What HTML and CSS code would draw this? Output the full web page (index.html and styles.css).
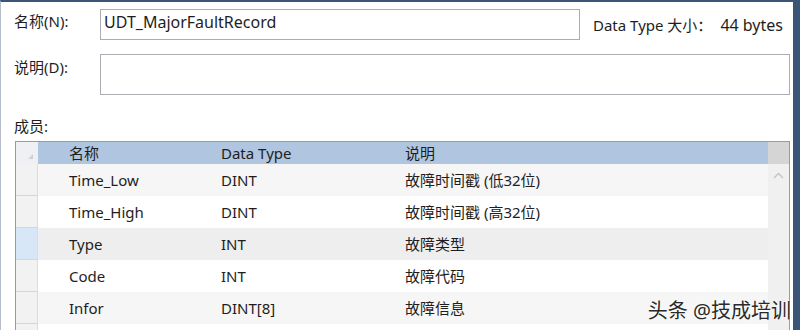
FILE: index.html
```html
<!DOCTYPE html>
<html lang="zh-CN">
<head>
    <meta charset="UTF-8">
    <title>UDT_MajorFaultRecord</title>
    <link rel="stylesheet" href="styles.css">
</head>
<body>

    <!-- Ventana del editor de UDT -->
    <div class="window">
        <div class="form">

            <div class="field-row">
                <span class="label">名称(N):</span>
                <div class="input name-input">UDT_MajorFaultRecord</div>
                <div class="size-info">
                    <span>Data Type 大小：</span>
                    <span class="size-value">44 bytes</span>
                </div>
            </div>

            <div class="field-row desc-row">
                <span class="label">说明(D):</span>
                <div class="input desc-input"></div>
            </div>

            <div class="members-label">成员:</div>

            <!-- Tabla de miembros -->
            <div class="grid">
                <div class="grid-main">
                    <div class="grid-row grid-head">
                        <div class="row-head corner"></div>
                        <div class="cell">名称</div>
                        <div class="cell">Data Type</div>
                        <div class="cell">说明</div>
                    </div>
                    <div class="grid-row alt">
                        <div class="row-head"></div>
                        <div class="cell">Time_Low</div>
                        <div class="cell">DINT</div>
                        <div class="cell">故障时间戳 (低32位)</div>
                    </div>
                    <div class="grid-row">
                        <div class="row-head"></div>
                        <div class="cell">Time_High</div>
                        <div class="cell">DINT</div>
                        <div class="cell">故障时间戳 (高32位)</div>
                    </div>
                    <div class="grid-row current">
                        <div class="row-head"></div>
                        <div class="cell">Type</div>
                        <div class="cell">INT</div>
                        <div class="cell">故障类型</div>
                    </div>
                    <div class="grid-row">
                        <div class="row-head"></div>
                        <div class="cell">Code</div>
                        <div class="cell">INT</div>
                        <div class="cell">故障代码</div>
                    </div>
                    <div class="grid-row alt">
                        <div class="row-head"></div>
                        <div class="cell">Infor</div>
                        <div class="cell">DINT[8]</div>
                        <div class="cell">故障信息</div>
                    </div>
                    <div class="grid-row">
                        <div class="row-head"></div>
                        <div class="cell"></div>
                        <div class="cell"></div>
                        <div class="cell"></div>
                    </div>
                </div>

                <!-- Barra de desplazamiento -->
                <div class="scrollbar">
                    <div class="scroll-head"></div>
                    <div class="scroll-up">
                        <svg width="11" height="7" viewBox="0 0 11 7">
                            <path d="M1 6 L5.5 1.5 L10 6" fill="none" stroke="#c4c4c4" stroke-width="1.3"/>
                        </svg>
                    </div>
                </div>
            </div>
        </div>

        <div class="watermark">头条 @技成培训</div>
    </div>

</body>
</html>
```

FILE: styles.css
```css
/* Estilos generales */
body {
    margin: 0;
    padding: 0;
    background: #fff;
    font-family: 'Noto Sans', 'Noto Sans CJK SC', sans-serif;
    font-size: 15px;
    color: #1e1e1e;
    overflow: hidden;
}

.window {
    position: relative;
    width: 800px;
    height: 330px;
    box-sizing: border-box;
    border-top: 2px solid #3b5579;
    border-left: 1px solid #b4bdc9;
    border-right: 7px solid #3b5579;
    overflow: hidden;
}

.form {
    padding: 7px 3px 0 13px;
}

/* Campos del formulario */
.field-row {
    display: flex;
    align-items: flex-start;
}

.label {
    width: 86px;
    flex: none;
    line-height: 20px;
    padding-top: 2px;
}

.input {
    box-sizing: border-box;
    border: 1px solid #abadb3;
    background: #fff;
}

.name-input {
    width: 480px;
    height: 31px;
    padding: 1px 3px;
    font-size: 16px;
    line-height: 22px;
}

.size-info {
    display: flex;
    gap: 8px;
    margin-left: 13px;
    padding-top: 6px;
    line-height: 20px;
}

.size-value {
    font-size: 16px;
}

.desc-row {
    margin-top: 14px;
}

.desc-row .label {
    padding-top: 3px;
}

.desc-input {
    flex: 1;
    height: 41px;
}

.members-label {
    margin-top: 21px;
    line-height: 20px;
    margin-bottom: 5px;
}

/* Tabla */
.grid {
    display: flex;
    height: 200px;
    border: 1px solid #8f9db1;
    border-bottom: none;
    margin-left: 1px;
}

.grid-main {
    flex: 1;
}

.grid-row {
    display: grid;
    grid-template-columns: 22px 152px 184px 1fr;
    height: 32px;
    background: #fff;
}

.grid-row.alt {
    background: #f6f6f6;
}

.grid-row.current {
    background: #eeeeee;
}

.grid-head {
    height: 22px;
    background: #b0c5df;
}

.cell {
    padding-left: 31px;
    line-height: 32px;
    white-space: nowrap;
}

.grid-head .cell {
    line-height: 22px;
}

.row-head {
    background: #f2f2f2;
    border-right: 1px solid #dcdcdc;
    border-bottom: 1px solid #d6d6d6;
    box-sizing: border-box;
}

.grid-row.current .row-head {
    background: #d8e7f7;
}

.row-head.corner {
    position: relative;
    background: #eef0f3;
    border-right: none;
    border-bottom: none;
}

.row-head.corner::after {
    content: '';
    position: absolute;
    right: 5px;
    bottom: 5px;
    border-left: 5px solid transparent;
    border-bottom: 5px solid #d0d0d0;
}

/* Barra de desplazamiento */
.scrollbar {
    width: 21px;
    background: #f0f0f0;
}

.scroll-head {
    height: 22px;
    background: #d5d5d5;
}

.scroll-up {
    display: flex;
    justify-content: center;
    padding-top: 8px;
}

/* Marca de agua */
.watermark {
    position: absolute;
    right: 2px;
    bottom: 6px;
    font-size: 20px;
    color: #2a2a2a;
    text-shadow: 0 0 2px #fff, 0 0 2px #fff;
}
```
